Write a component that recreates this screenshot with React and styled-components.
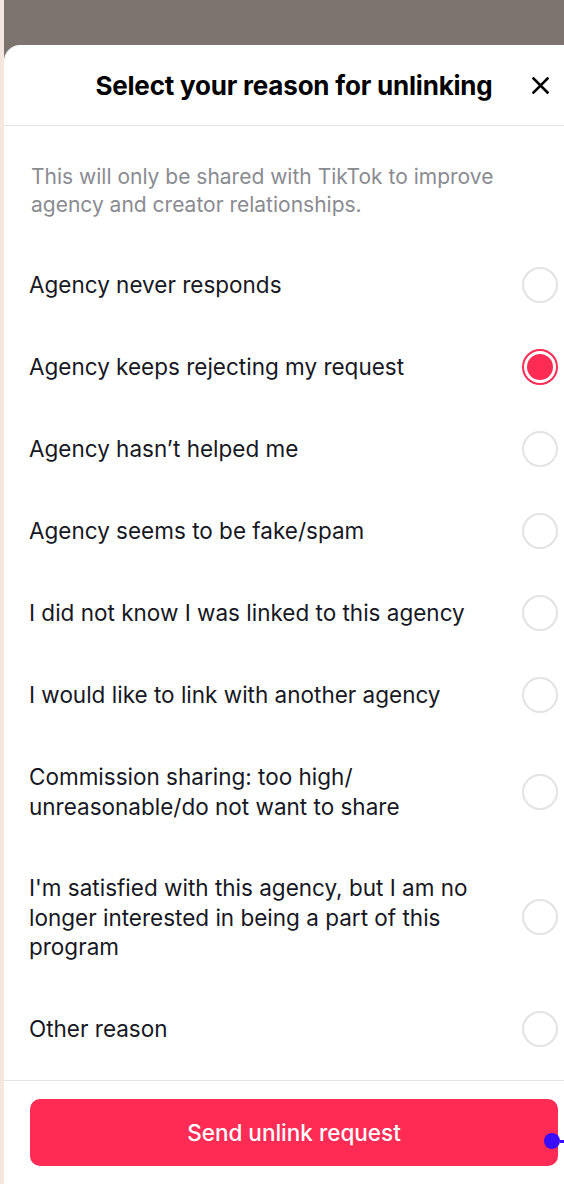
import React, { useState } from 'react';
import styled, { createGlobalStyle } from 'styled-components';

const GlobalStyle = createGlobalStyle`
  html, body {
    margin: 0;
    padding: 0;
    overflow: hidden;
    background: #f5e6df;
  }
  body {
    font-family: Inter, "Noto Sans", sans-serif;
    -webkit-font-smoothing: antialiased;
  }
`;

const reasons = [
    'Agency never responds',
    'Agency keeps rejecting my request',
    'Agency hasn\u2019t helped me',
    'Agency seems to be fake/spam',
    'I did not know I was linked to this agency',
    'I would like to link with another agency',
    'Commission sharing: too high/ unreasonable/do not want to share',
    'I\'m satisfied with this agency, but I am no longer interested in being a part of this program',
    'Other reason',
];

const Screen = styled.div`
    width: 564px;
    height: 1184px;
    padding-left: 4px;
    box-sizing: border-box;
    overflow: hidden;
    background: #f5e6df;
`

const Backdrop = styled.div`
    width: 580px;
    height: 100%;
    background: #7d7470;
    padding-top: 45px;
    box-sizing: border-box;
    display: flex;
`

const Sheet = styled.div`
    flex: 1;
    background: #ffffff;
    border-radius: 16px 16px 0 0;
    display: flex;
    flex-direction: column;
`

const Header = styled.div`
    height: 80px;
    flex-shrink: 0;
    display: flex;
    align-items: center;
    justify-content: center;
    position: relative;
    border-bottom: 1px solid #e3e3e4;
`

const Title = styled.h1`
    margin: 0;
    font-size: 26px;
    font-weight: 700;
    color: #000000;
    letter-spacing: -0.2px;
`

const CloseButton = styled.button`
    position: absolute;
    right: 32px;
    top: 50%;
    transform: translateY(-50%);
    width: 24px;
    height: 24px;
    padding: 0;
    border: none;
    background: none;
    display: flex;
    align-items: center;
    justify-content: center;
`

const Body = styled.div`
    flex: 1;
    padding: 37px 0 0;
`

const Description = styled.p`
    margin: 0 26px 25px 27px;
    font-size: 21px;
    line-height: 28px;
    color: #8a8b91;
    max-width: 490px;
`

const Row = styled.label`
    display: flex;
    align-items: center;
    justify-content: space-between;
    min-height: 82px;
    padding: 0 26px 0 25px;
    box-sizing: border-box;
    cursor: pointer;
`

const RowText = styled.span`
    padding: 26px 0;
    font-size: 22.5px;
    line-height: 29.5px;
    color: #161823;
    max-width: 460px;
`

const Radio = styled.span`
    width: 36px;
    height: 36px;
    border-radius: 50%;
    flex-shrink: 0;
    box-sizing: border-box;
    border: ${p => p.checked ? '2.5px solid #fe2c55' : '2px solid #e3e3e4'};
    display: flex;
    align-items: center;
    justify-content: center;
    &::after {
        content: '';
        display: ${p => p.checked ? 'block' : 'none'};
        width: 26px;
        height: 26px;
        border-radius: 50%;
        background: #fe2c55;
    }
`

const Footer = styled.div`
    border-top: 1px solid #e3e3e4;
    padding: 18px 26px 18px 26px;
    position: relative;
`

const SendButton = styled.button`
    width: 100%;
    height: 67px;
    border: none;
    border-radius: 10px;
    background: #fe2c55;
    color: #ffffff;
    font-family: Inter, "Noto Sans", sans-serif;
    font-size: 22.5px;
    font-weight: 500;
`

const Handle = styled.span`
    position: absolute;
    left: 540px;
    top: 52px;
    display: flex;
    align-items: center;
    &::before {
        content: '';
        width: 16px;
        height: 16px;
        border-radius: 50%;
        background: #3a0cff;
    }
    &::after {
        content: '';
        width: 20px;
        height: 3px;
        background: #3a0cff;
    }
`

const App = () => {
    const [selected, setSelected] = useState(1);

    return (
        <>
            <GlobalStyle />
            <Screen>
                <Backdrop>
                    <Sheet>
                        <Header>
                            <Title>Select your reason for unlinking</Title>
                            <CloseButton aria-label='close'>
                                <svg width='17' height='17' viewBox='0 0 17 17'>
                                    <path d='M1.5 1.5 L15.5 15.5 M15.5 1.5 L1.5 15.5' stroke='#000' strokeWidth='2.6' strokeLinecap='square' />
                                </svg>
                            </CloseButton>
                        </Header>
                        <Body>
                            <Description>
                                This will only be shared with TikTok to improve agency and creator relationships.
                            </Description>
                            {
                                reasons.map((reason, i) => {
                                    return (
                                        <Row key={reason} onClick={() => setSelected(i)}>
                                            <RowText>{reason}</RowText>
                                            <Radio checked={selected === i} />
                                        </Row>
                                    )
                                })
                            }
                        </Body>
                        <Footer>
                            <SendButton>Send unlink request</SendButton>
                            <Handle />
                        </Footer>
                    </Sheet>
                </Backdrop>
            </Screen>
        </>
    )
}

export default App;
